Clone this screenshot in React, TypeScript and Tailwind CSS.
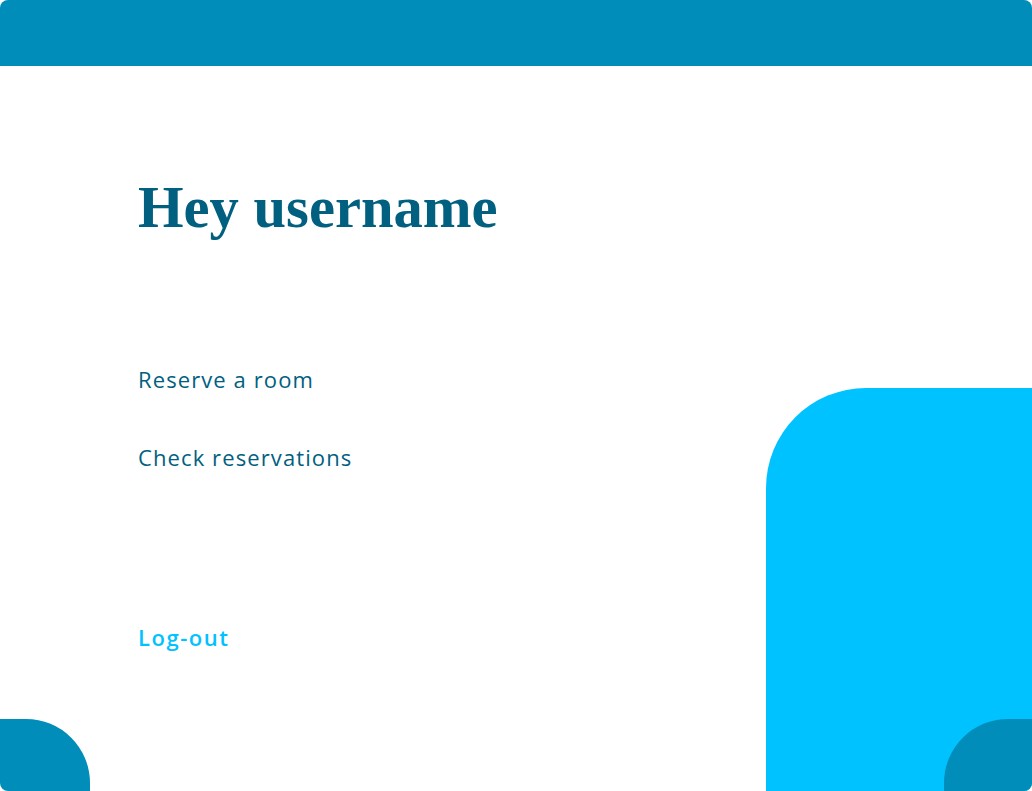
import React from "react";

export default function App() {
  return (
    <div className="relative w-[1032px] h-[791px] overflow-hidden rounded-[8px] bg-white">
      <div className="h-[66px] bg-[#018dba]" />
      <div className="absolute right-0 bottom-0 w-[266px] h-[403px] rounded-tl-[100px] bg-[#00c2ff]" />
      <div className="absolute left-0 bottom-0 w-[90px] h-[72px] rounded-tr-[64px] bg-[#018dba]" />
      <div className="absolute right-0 bottom-0 w-[88px] h-[72px] rounded-tl-[64px] bg-[#018dba]" />
      <main className="relative flex flex-col items-start pl-[138px]">
        <h1
          className="mt-[113px] text-[58.6px] leading-[58px] font-bold text-[#01607f]"
          style={{ fontFamily: '"Liberation Serif", serif' }}
        >
          Hey username
        </h1>
        <div className="flex flex-col items-start" style={{ fontFamily: '"Open Sans", sans-serif' }}>
          <a className="mt-[128px] text-[22px] leading-[28px] tracking-[0.05em] text-[#01607f]">Reserve a room</a>
          <a className="mt-[50px] text-[22px] leading-[28px] tracking-[0.05em] text-[#01607f]">Check reservations</a>
          <a className="mt-[152px] text-[22px] leading-[28px] tracking-[0.07em] font-semibold text-[#00c2ff]">Log-out</a>
        </div>
      </main>
    </div>
  );
}
